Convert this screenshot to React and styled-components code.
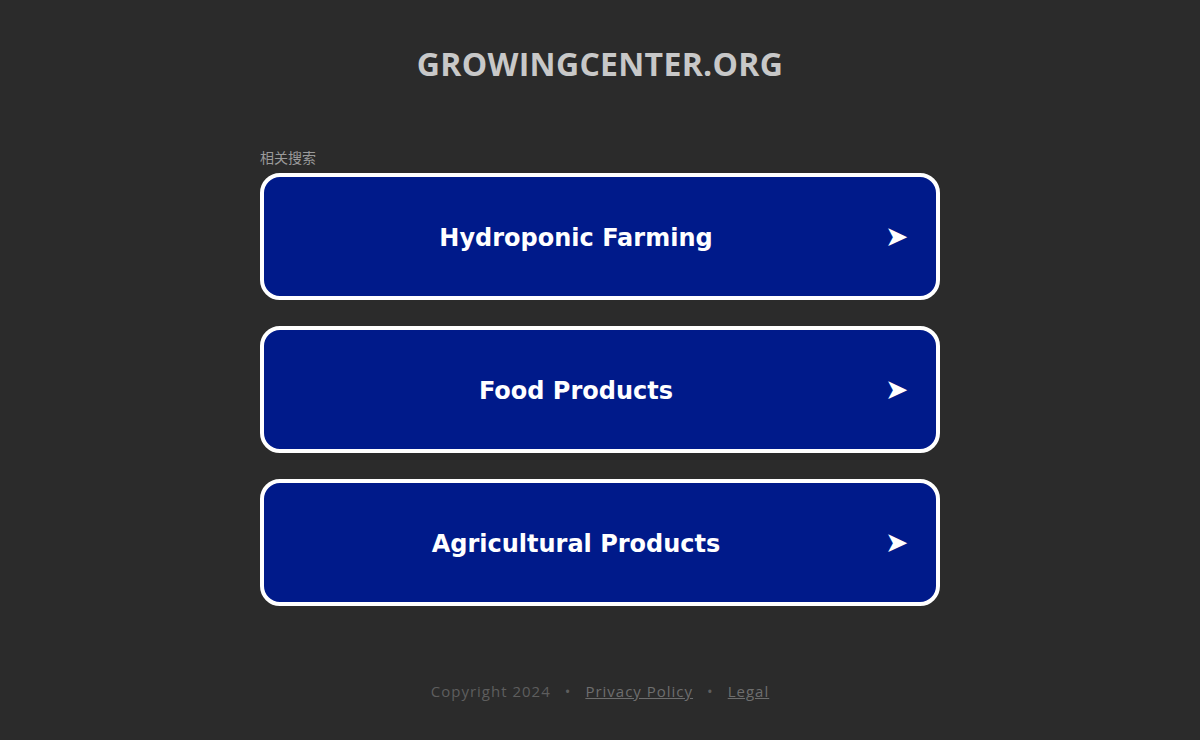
import styled, { createGlobalStyle } from "styled-components";

const GlobalStyle = createGlobalStyle`
  html, body {
    margin: 0;
    padding: 0;
    background: #2b2b2b;
  }
  body {
    font-family: "Open Sans", "Noto Sans", sans-serif;
  }
`;

const Page = styled.div`
  width: 1200px;
  height: 740px;
  display: flex;
  flex-direction: column;
  align-items: center;
  box-sizing: border-box;
  padding-top: 43px;
`;

const Title = styled.h1`
  margin: 0;
  font-family: "Open Sans", sans-serif;
  font-weight: 700;
  font-size: 32px;
  line-height: 42px;
  color: #c8c8c8;
  letter-spacing: 0.3px;
`;

const Results = styled.section`
  width: 680px;
  margin-top: 63px;
  display: flex;
  flex-direction: column;
`;

const Label = styled.div`
  font-family: "Noto Sans CJK SC", sans-serif;
  font-size: 14px;
  line-height: 19px;
  color: #9a9a9a;
  margin-bottom: 6px;
`;

const List = styled.div`
  display: flex;
  flex-direction: column;
  gap: 26px;
`;

const Card = styled.a`
  display: flex;
  align-items: center;
  height: 127px;
  box-sizing: border-box;
  border: 4px solid #ffffff;
  border-radius: 20px;
  background: #001a8a;
  color: #ffffff;
  text-decoration: none;
  cursor: pointer;
`;

const CardText = styled.span`
  flex: 1;
  text-align: center;
  font-family: "DejaVu Sans", sans-serif;
  font-weight: 700;
  font-size: 24px;
  padding-top: 2px;
`;

const Arrow = styled.span`
  width: 48px;
  margin-left: -3px;
  margin-right: 3px;
  font-family: "DejaVu Sans", sans-serif;
  font-size: 28px;
  line-height: 1;
`;

const Footer = styled.footer`
  margin-top: 75px;
  display: flex;
  align-items: center;
  gap: 14px;
  font-family: "Open Sans", sans-serif;
  font-size: 15px;
  letter-spacing: 1px;
  color: #5e5e5e;
`;

const FooterLink = styled.a`
  color: #6e6e6e;
  text-decoration: underline;
`;

const items = ["Hydroponic Farming", "Food Products", "Agricultural Products"];

export default function App() {
  return (
    <>
      <GlobalStyle />
      <Page>
        <Title>GROWINGCENTER.ORG</Title>
        <Results>
          <Label>相关搜索</Label>
          <List>
            {items.map((item) => (
              <Card key={item}>
                <CardText>{item}</CardText>
                <Arrow>➤</Arrow>
              </Card>
            ))}
          </List>
        </Results>
        <Footer>
          <span>Copyright 2024</span>
          <span>•</span>
          <FooterLink>Privacy Policy</FooterLink>
          <span>•</span>
          <FooterLink>Legal</FooterLink>
        </Footer>
      </Page>
    </>
  );
}
